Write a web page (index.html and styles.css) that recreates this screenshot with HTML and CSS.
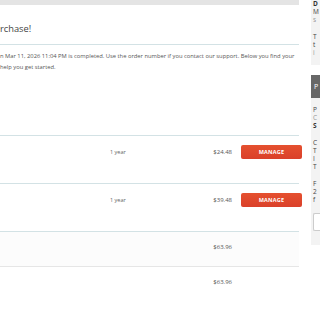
FILE: index.html
```
<!DOCTYPE html>
<html>

<head>
	<meta charset="utf-8">
	<title>Order completed</title>
	<link rel="stylesheet" href="styles.css">
</head>

<body>
	<div class="page">
		<div class="main">
			<div class="topbar"></div>
			<h1 class="title">rchase!</h1>
			<p class="intro">n Mar 11, 2026 11:04 PM is completed. Use the order number if you contact our support. Below you find your<br> help you get started.</p>

			<div class="items">
				<div class="row item">
					<span class="term">1 year</span>
					<span class="price">$24.48</span>
					<a class="btn" href="#">MANAGE</a>
				</div>
				<div class="row item">
					<span class="term">1 year</span>
					<span class="price">$39.48</span>
					<a class="btn" href="#">MANAGE</a>
				</div>
				<div class="row sum shaded">
					<span class="price">$63.96</span>
				</div>
				<div class="row sum last">
					<span class="price">$63.96</span>
				</div>
			</div>
		</div>

		<div class="side">
			<div class="box first">
				<div class="group">
					<p class="strong">D</p>
					<p>M</p>
					<p class="muted">s</p>
				</div>
				<div class="group">
					<p>T</p>
					<p>t</p>
					<p class="muted">i</p>
				</div>
			</div>
			<div class="head">P</div>
			<div class="box">
				<div class="group">
					<p>P</p>
					<p class="muted">C</p>
					<p class="strong">S</p>
				</div>
				<div class="group">
					<p>C</p>
					<p>T</p>
					<p>I</p>
					<p>T</p>
				</div>
				<div class="group">
					<p>F</p>
					<p>2</p>
					<p>f</p>
				</div>
				<div class="field"></div>
			</div>
		</div>
	</div>
</body>

</html>
```

FILE: styles.css
```
* {
	margin: 0;
	padding: 0;
}

body {
	font-family: "Open Sans", "DejaVu Sans", sans-serif;
	background: #fff;
	color: #555;
	overflow: hidden;
}

.page {
	display: flex;
	width: 320px;
	overflow: hidden;
}

.main {
	width: 299px;
	flex: none;
}

.topbar {
	height: 5px;
	background: #e4e4e4;
}

.title {
	font-size: 9.3px;
	line-height: 12px;
	font-weight: 400;
	color: #444;
	padding-top: 18px;
	padding-bottom: 9px;
	border-bottom: 1px solid #d3e2e5;
}

.intro {
	font-size: 5.8px;
	line-height: 11px;
	color: #555;
	margin-top: 6px;
	white-space: nowrap;
}

.items {
	margin-top: 62px;
}

.row {
	display: grid;
	grid-template-columns: 110px 1fr auto 58px;
	align-items: start;
	border-top: 1px solid #d3e2e5;
	padding-top: 9px;
	font-size: 6px;
	line-height: 14px;
}

.item {
	height: 38px;
}

.sum {
	height: 26px;
	padding-top: 8px;
}

.shaded {
	background: #fcfcfc;
}

.last {
	border-top-color: #e6e6e6;
}

.term {
	grid-column: 2;
	color: #666;
	font-size: 5.5px;
}

.price {
	grid-column: 3;
	color: #555;
	margin-right: 9px;
	text-align: right;
}

.btn {
	display: block;
	width: 61px;
	height: 14px;
	line-height: 14px;
	border-radius: 2px;
	background: linear-gradient(#e5502f, #da402a);
	color: #fff;
	font-size: 5.5px;
	font-weight: 700;
	letter-spacing: 0.2px;
	text-align: center;
	text-decoration: none;
}

.side {
	width: 9px;
	flex: none;
	margin-left: 12px;
	display: flex;
	flex-direction: column;
	font-size: 6.5px;
	line-height: 8px;
	color: #444;
}

.box {
	background: #f3f3f3;
	padding: 8px 0 14px 2px;
	display: flex;
	flex-direction: column;
	gap: 9px;
}

.box.first {
	padding-top: 0;
	padding-bottom: 8px;
}

.head {
	margin-top: 10px;
	height: 23px;
	line-height: 23px;
	background: #676767;
	color: #fff;
	font-size: 7px;
	padding-left: 3px;
}

.strong {
	font-weight: 700;
	color: #333;
}

.muted {
	color: #999;
}

.field {
	height: 16px;
	background: #fff;
	border: 1px solid #ccc;
	border-right: 0;
	border-radius: 2px 0 0 2px;
}
```
